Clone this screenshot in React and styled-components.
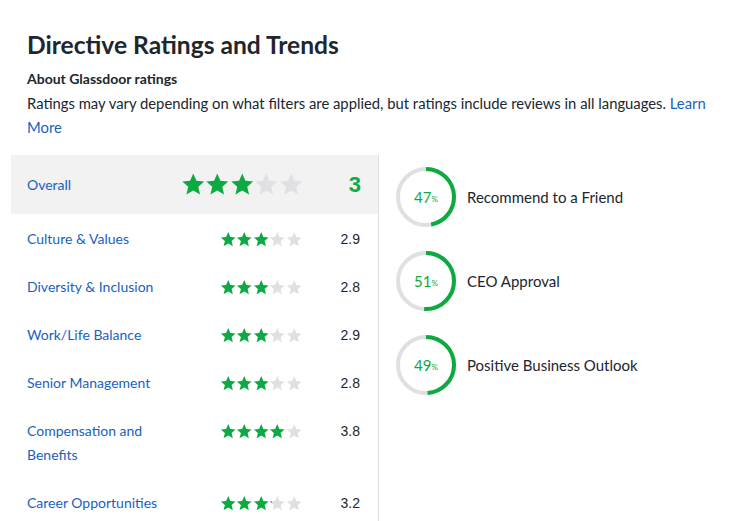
import React from "react";
import styled, { createGlobalStyle } from "styled-components";

const Global = createGlobalStyle`
  body {
    margin: 0;
    background: #fff;
    font-family: Lato, "Noto Sans", sans-serif;
    color: #20262e;
  }
`;

const Page = styled.div`
  padding: 29px 11px 0;
`;

const Intro = styled.div`
  padding: 0 0 0 16px;
`;

const Title = styled.h1`
  margin: 0;
  font-size: 24.6px;
  font-weight: 700;
  line-height: 32px;
  color: #20262e;
`;

const Sub = styled.h2`
  margin: 6px 0 0;
  font-size: 14px;
  font-weight: 700;
  line-height: 24px;
`;

const Para = styled.p`
  margin: 0;
  font-size: 14.8px;
  line-height: 24px;
  color: #20262e;
`;

const Link = styled.a`
  color: #1861bf;
  text-decoration: none;
`;

const Columns = styled.div`
  display: flex;
  margin-top: 16px;
`;

const Left = styled.div`
  width: 367px;
  border-right: 1px solid #dedede;
`;

const Row = styled.div`
  display: grid;
  grid-template-columns: 1fr auto 58px;
  align-items: ${(p) => (p.$big ? "center" : "start")};
  padding: ${(p) => (p.$big ? "0 17px 0 16px" : "13px 18px 11px 16px")};
  height: ${(p) => (p.$big ? "59px" : "auto")};
  background: ${(p) => (p.$big ? "#f2f2f2" : "transparent")};
`;

const Label = styled.a`
  color: #1861bf;
  font-size: 14px;
  line-height: 24px;
  max-width: 135px;
`;

const Stars = styled.div`
  display: flex;
  height: 24px;
  align-items: center;
`;

const Score = styled.div`
  text-align: right;
  font-family: "Liberation Sans", Arial, sans-serif;
  font-size: ${(p) => (p.$big ? "22px" : "14px")};
  font-weight: ${(p) => (p.$big ? 700 : 400)};
  color: ${(p) => (p.$big ? "#0caa41" : "#20262e")};
  line-height: 24px;
`;

const Right = styled.div`
  display: flex;
  flex-direction: column;
  gap: 22px;
  padding: 11px 0 0 16px;
`;

const Stat = styled.div`
  display: flex;
  align-items: center;
  gap: 10px;
`;

const Ring = styled.div`
  position: relative;
  width: 62px;
  height: 62px;
`;

const Pct = styled.div`
  position: absolute;
  inset: 0;
  display: flex;
  align-items: center;
  justify-content: center;
  color: #0caa41;
  font-size: 15px;
  small {
    font-size: 8px;
    margin-top: 4px;
  }
`;

const StatLabel = styled.div`
  font-size: 15px;
  color: #20262e;
`;

const STAR = "M12 1.5l3.1 7.1 7.6.7-5.8 5.1 1.8 7.6L12 18l-6.7 4 1.8-7.6L1.3 9.3l7.6-.7z";

function Star({ size, fill, id }) {
  return (
    <svg width={size} height={size} viewBox="0 0 24 24">
      <defs>
        <linearGradient id={id}>
          <stop offset={fill} stopColor="#0caa41" />
          <stop offset={fill} stopColor="#dee0e3" />
        </linearGradient>
      </defs>
      <path d={STAR} fill={`url(#${id})`} />
    </svg>
  );
}

function StarRow({ value, size, name }) {
  return (
    <Stars>
      {[0, 1, 2, 3, 4].map((i) => {
        const f = Math.max(0, Math.min(1, value - i));
        return <Star key={i} size={size} fill={f} id={`${name}-${i}`} />;
      })}
    </Stars>
  );
}

function Donut({ pct }) {
  const r = 28;
  const c = 2 * Math.PI * r;
  return (
    <Ring>
      <svg width="62" height="62" viewBox="0 0 62 62">
        <circle cx="31" cy="31" r={r} fill="none" stroke="#dee0e3" strokeWidth="4" />
        <circle
          cx="31"
          cy="31"
          r={r}
          fill="none"
          stroke="#0caa41"
          strokeWidth="4"
          strokeDasharray={`${(c * pct) / 100} ${c}`}
          transform="rotate(-90 31 31)"
        />
      </svg>
      <Pct>
        {pct}
        <small>%</small>
      </Pct>
    </Ring>
  );
}

const ratings = [
  { name: "Culture & Values", score: "2.9", fill: 3 },
  { name: "Diversity & Inclusion", score: "2.8", fill: 3 },
  { name: "Work/Life Balance", score: "2.9", fill: 3 },
  { name: "Senior Management", score: "2.8", fill: 3 },
  { name: "Compensation and Benefits", score: "3.8", fill: 4 },
  { name: "Career Opportunities", score: "3.2", fill: 3.15 },
];

const stats = [
  { pct: 47, label: "Recommend to a Friend" },
  { pct: 51, label: "CEO Approval" },
  { pct: 49, label: "Positive Business Outlook" },
];

export default function App() {
  return (
    <Page>
      <Global />
      <Intro>
        <Title>Directive Ratings and Trends</Title>
        <Sub>About Glassdoor ratings</Sub>
        <Para>
          Ratings may vary depending on what filters are applied, but ratings include reviews in all languages.{" "}
          <Link href="#">Learn More</Link>
        </Para>
      </Intro>
      <Columns>
        <Left>
          <Row $big>
            <Label>Overall</Label>
            <StarRow value={3} size={24.5} name="ov" />
            <Score $big>3</Score>
          </Row>
          {ratings.map((r, i) => (
            <Row key={r.name}>
              <Label>{r.name}</Label>
              <StarRow value={r.fill} size={16.5} name={`r${i}`} />
              <Score>{r.score}</Score>
            </Row>
          ))}
        </Left>
        <Right>
          {stats.map((s) => (
            <Stat key={s.label}>
              <Donut pct={s.pct} />
              <StatLabel>{s.label}</StatLabel>
            </Stat>
          ))}
        </Right>
      </Columns>
    </Page>
  );
}
